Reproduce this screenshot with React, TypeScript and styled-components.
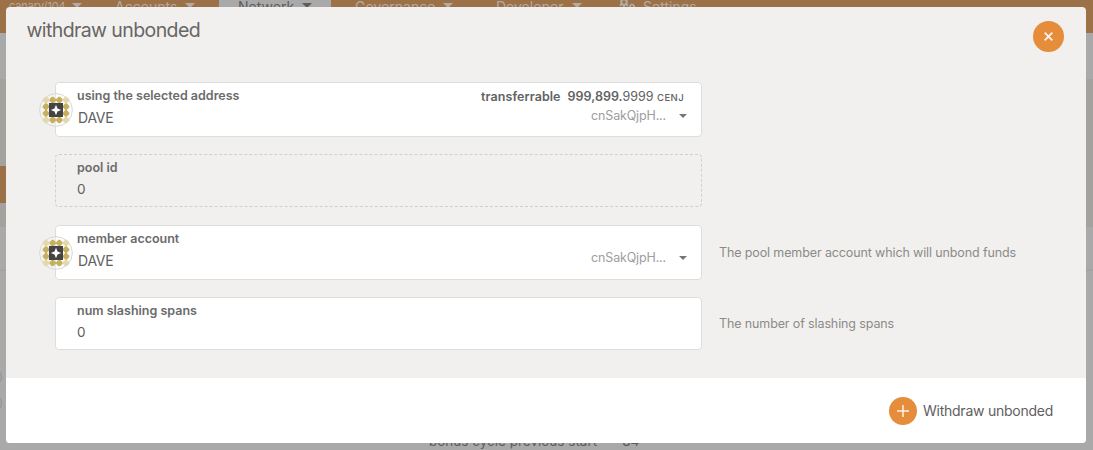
import React from 'react';
import styled, { createGlobalStyle, css } from 'styled-components';

const GlobalStyle = createGlobalStyle`
  * { box-sizing: border-box; }
  body { margin: 0; font-family: Inter, "Liberation Sans", sans-serif; color: #4e4e4e; }
`;

const Page = styled.div`
  position: relative;
  width: 1093px;
  height: 450px;
  overflow: hidden;
  background: #a9a9a9;
`;

const Backdrop = styled.div`
  display: flex;
  flex-direction: column;
  height: 450px;
`;

const MenuBar = styled.nav`
  display: flex;
  height: 33px;
  flex: none;
  background: #9d7147;
  color: #b3aba3;
`;

const MenuItem = styled.div<{ $width: number; $pad: number; $active?: boolean; $small?: boolean; $gap?: number }>`
  display: flex;
  align-items: flex-start;
  gap: ${p => p.$gap ?? 8}px;
  width: ${p => p.$width}px;
  padding-left: ${p => p.$pad}px;
  font-size: ${p => (p.$small ? 11 : 14)}px;
  line-height: 20px;
  letter-spacing: ${p => (p.$small ? -0.1 : 0)}px;
  white-space: nowrap;
  ${p => p.$active && css`background: #a9a9a9; color: #5d5d5d;`}
  > span { margin-top: ${p => (p.$small ? -4 : -3.5)}px; }
`;

const Caret = styled.i<{ $size?: number; $top?: number }>`
  flex: none;
  width: 0;
  height: 0;
  margin-top: ${p => p.$top ?? 3}px;
  border: ${p => p.$size ?? 5}px solid transparent;
  border-top-color: currentColor;
  border-bottom: 0;
`;

const Band = styled.div<{ $height: number; $color: string }>`
  flex: none;
  height: ${p => p.$height}px;
  padding-top: ${p => (p.$height > 100 ? 87 : 0)}px;
  background: ${p => p.$color};
`;

const Accent = styled.div`
  width: 30px;
  height: 37px;
  background: #9d7147;
`;

const Listing = styled.div`
  display: flex;
  height: 181px;
  border-top: 2px solid #a3a3a3;
`;

const Markers = styled.div`
  display: flex;
  flex-direction: column;
  gap: 8px;
  width: 429px;
  padding-top: 97px;
`;

const Marker = styled.div`
  width: 18px;
  height: 18px;
  margin-left: -16px;
  border: 1px solid #919191;
  border-radius: 50%;
`;

const CycleText = styled.div`
  display: flex;
  gap: 25px;
  padding-top: 160px;
  font-size: 13.5px;
  line-height: 20px;
  color: #5d5d5d;
  white-space: nowrap;
`;

const Dialog = styled.section`
  position: absolute;
  top: 7px;
  left: 6px;
  display: flex;
  flex-direction: column;
  width: 1080px;
  height: 436px;
  overflow: hidden;
  border-radius: 4px;
  background: #f2f0ee;
`;

const DialogHeader = styled.header`
  display: flex;
  justify-content: space-between;
  height: 75px;
  padding: 14px 22px 0 20.5px;
`;

const Title = styled.h1`
  margin: -3px 0 0;
  font-size: 19.5px;
  font-weight: 400;
  line-height: 24px;
  letter-spacing: -0.6px;
  color: #666665;
`;

const RoundButton = styled.button<{ $size: number }>`
  display: flex;
  align-items: center;
  justify-content: center;
  flex: none;
  width: ${p => p.$size}px;
  height: ${p => p.$size}px;
  padding: 0;
  border: 0;
  border-radius: 50%;
  background: #e58d3a;
`;

const Form = styled.div`
  display: flex;
  flex-direction: column;
  height: 296px;
  padding-left: 49px;
`;

const Row = styled.div<{ $gap: number }>`
  display: flex;
  align-items: center;
  gap: 17px;
  margin-bottom: ${p => p.$gap}px;
`;

const Field = styled.div<{ $tall?: boolean; $disabled?: boolean }>`
  position: relative;
  display: flex;
  justify-content: space-between;
  width: 647px;
  height: ${p => (p.$tall ? 55 : 53)}px;
  padding: 4px 14px 0 21px;
  border: 1px ${p => (p.$disabled ? 'dashed #cfcfcd' : 'solid #dcdddd')};
  border-radius: 4px;
  background: ${p => (p.$disabled ? 'transparent' : '#fff')};
`;

const FieldText = styled.div`
  display: flex;
  flex-direction: column;
  gap: 5px;
`;

const Label = styled.label`
  font-size: 12.5px;
  font-weight: 600;
  line-height: 17px;
  color: #6b6b6a;
`;

const Value = styled.div<{ $tall?: boolean }>`
  padding-left: ${p => (p.$tall ? 1 : 0)}px;
  font-size: ${p => (p.$tall ? 14 : 13.5)}px;
  line-height: 17px;
  letter-spacing: ${p => (p.$tall ? -0.25 : 0)}px;
  color: #606060;
`;

const Side = styled.div`
  display: flex;
  flex-direction: column;
  align-items: flex-end;
`;

const Balance = styled.div`
  display: flex;
  align-items: baseline;
  height: 20px;
  padding: 1px 3px 0 0;
  font-size: 12.5px;
  line-height: 18px;
  color: #626262;
  b { font-weight: 600; }
  small { margin-left: 3.5px; font-size: 9.5px; font-weight: 500; letter-spacing: 0.4px; }
`;

const BalanceLabel = styled.b`
  margin-right: 7px;
  letter-spacing: 0.08px;
`;

const Address = styled.div<{ $top: number }>`
  display: flex;
  align-items: center;
  gap: 13px;
  height: 17px;
  margin-top: ${p => p.$top}px;
  color: #767676;
  span { font-size: 12.5px; line-height: 17px; letter-spacing: -0.15px; color: #9d9d9d; }
`;

const IconRing = styled.div`
  position: absolute;
  top: 10px;
  left: -17px;
  width: 34px;
  height: 34px;
  svg { display: block; }
`;

const Hint = styled.div`
  font-size: 12.5px;
  line-height: 18px;
  letter-spacing: -0.12px;
  color: #8b8b89;
  white-space: nowrap;
`;

const DialogFooter = styled.footer`
  display: flex;
  align-items: center;
  justify-content: flex-end;
  height: 65px;
  padding-right: 33px;
  background: #fff;
`;

const Submit = styled.div`
  display: flex;
  align-items: center;
  gap: 6px;
  font-size: 14px;
  letter-spacing: -0.25px;
  color: #606060;
`;

const edgeCells = [[1, 0], [2, 0], [0, 1], [3, 1], [0, 2], [3, 2], [1, 3], [2, 3]];
const cornerCells = [[0, 0], [3, 0], [0, 3], [3, 3]];

const cellPath = ([cx, cy]: number[]) => {
  const x = 7 + cx * 6.67;
  const y = 7 + cy * 6.67;
  return `M${x - 0.7} ${y - 3.3}h1.4l2.6 2.6v1.4l-2.6 2.6h-1.4l-2.6-2.6v-1.4z`;
};

const Identicon = () => (
  <IconRing>
    <svg width="34" height="34" viewBox="0 0 34 34">
      <circle cx="17" cy="17" r="16.4" fill="#f7f7f7" fillOpacity="0.4" stroke="#d8d8d8" />
      {edgeCells.map(c => <path key={c.join()} d={cellPath(c)} fill="#c6b05c" />)}
      {cornerCells.map(c => <path key={c.join()} d={cellPath(c)} fill="#e1d8ae" />)}
      <rect x="10" y="10" width="14" height="14" fill="#444" />
      <path d="M17 11.8l1.5 3.7 3.7 1.5-3.7 1.5-1.5 3.7-1.5-3.7-3.7-1.5 3.7-1.5z" fill="#fff" />
    </svg>
  </IconRing>
);

const GearsIcon = () => (
  <svg width="17" height="9" viewBox="0 0 17 9">
    <g fill="none" stroke="currentColor">
      <circle cx="5" cy="2" r="2.8" strokeWidth="2" />
      <path d="M1 5.600l1.800-1.200M9 5.600L7.200 4.400M5 4.500v2.500" strokeWidth="2" />
      <circle cx="13" cy="6.300" r="1.800" strokeWidth="1.500" />
      <path d="M9.800 6.500h1M15.200 6.500h1M11.500 4l.6.8M14.500 4l-.6.8" strokeWidth="1.500" />
    </g>
  </svg>
);

interface AccountProps { label: string; children?: React.ReactNode; addressTop: number }

const AccountField = ({ label, children, addressTop }: AccountProps) => (
  <Field $tall>
    <Identicon />
    <FieldText>
      <Label>{label}</Label>
      <Value $tall>DAVE</Value>
    </FieldText>
    <Side>
      {children}
      <Address $top={addressTop}><span>cnSakQjpH...</span><Caret $size={4} $top={1} /></Address>
    </Side>
  </Field>
);

export default function App() {
  return (
    <Page>
      <GlobalStyle />
      <Backdrop>
        <MenuBar>
          <MenuItem $width={96} $pad={9} $small $gap={6}><span>canary/104</span><Caret /></MenuItem>
          <MenuItem $width={123} $pad={19}><span>Accounts</span><Caret /></MenuItem>
          <MenuItem $width={112} $pad={19} $active><span>Network</span><Caret /></MenuItem>
          <MenuItem $width={146} $pad={24}><span>Governance</span><Caret /></MenuItem>
          <MenuItem $width={124} $pad={19}><span>Developer</span><Caret /></MenuItem>
          <MenuItem $width={110} $pad={18} $gap={7}><GearsIcon /><span>Settings</span></MenuItem>
        </MenuBar>
        <Band $height={46} $color="#a9a9a9" />
        <Band $height={148} $color="#a3a29f"><Accent /></Band>
        <Band $height={42} $color="#a9a9a9" />
        <Listing>
          <Markers><Marker /><Marker /></Markers>
          <CycleText><span>bonus cycle previous start</span><span>84</span></CycleText>
        </Listing>
      </Backdrop>
      <Dialog>
        <DialogHeader>
          <Title>withdraw unbonded</Title>
          <RoundButton $size={31} aria-label="Close">
            <svg width="11" height="11" viewBox="0 0 11 11">
              <path d="M1.700 1.700l7.600 7.600M9.300 1.700l-7.600 7.600" stroke="#fbf1e6" strokeWidth="1.900" />
            </svg>
          </RoundButton>
        </DialogHeader>
        <Form>
          <Row $gap={17}>
            <AccountField label="using the selected address" addressTop={0}>
              <Balance>
                <BalanceLabel>transferrable</BalanceLabel>
                <b>999,899.</b><span>9999</span><small>CENJ</small>
              </Balance>
            </AccountField>
          </Row>
          <Row $gap={18}>
            <Field $disabled>
              <FieldText><Label>pool id</Label><Value>0</Value></FieldText>
            </Field>
          </Row>
          <Row $gap={17}>
            <AccountField label="member account" addressTop={19} />
            <Hint>The pool member account which will unbond funds</Hint>
          </Row>
          <Row $gap={0}>
            <Field>
              <FieldText><Label>num slashing spans</Label><Value>0</Value></FieldText>
            </Field>
            <Hint>The number of slashing spans</Hint>
          </Row>
        </Form>
        <DialogFooter>
          <Submit>
            <RoundButton $size={28} aria-label="Add">
              <svg width="12" height="12" viewBox="0 0 12 12">
                <path d="M6 0v12M0 6h12" stroke="#fbf1e6" strokeWidth="1.500" />
              </svg>
            </RoundButton>
            <span>Withdraw unbonded</span>
          </Submit>
        </DialogFooter>
      </Dialog>
    </Page>
  );
}
